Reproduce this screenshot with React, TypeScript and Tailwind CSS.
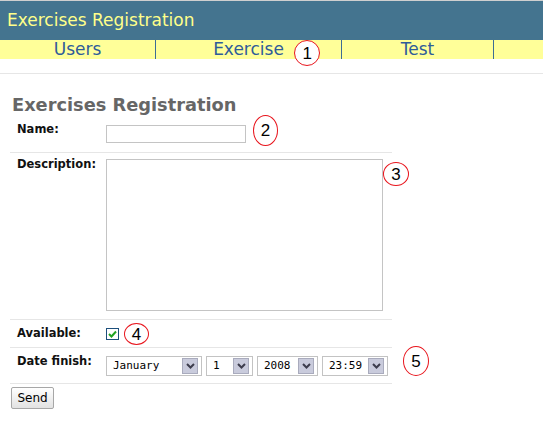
const Badge = ({ n, className }: { n: number; className: string }) => (
  <span
    className={`absolute flex items-center justify-center rounded-[50%] border border-[#e8141c] bg-white text-[17px] leading-none text-black font-['Liberation_Sans',sans-serif] ${className}`}
  >
    {n}
  </span>
);

const Select = ({ value, width }: { value: string; width: string }) => (
  <div
    className={`flex h-[20px] items-center justify-between border border-[#c3c3c3] bg-white pl-[6px] pr-[3px] ${width}`}
  >
    <span className="font-['DejaVu_Sans_Mono',monospace] text-[11px] text-black">
      {value}
    </span>
    <span className="flex h-[16px] w-[16px] items-center justify-center border border-[#a9abbd] bg-[#c9cbdc]">
      <svg width="9" height="6" viewBox="0 0 9 6">
        <path d="M1 1 L4.5 4.5 L8 1" fill="none" stroke="#3d3d4d" strokeWidth="2" />
      </svg>
    </span>
  </div>
);

const tabs = [
  { label: "Users", w: "w-[156px]" },
  { label: "Exercise", w: "w-[186px]", badge: true },
  { label: "Test", w: "w-[152px]" },
];

const App = () => {
  return (
    <div className="min-h-[433px] bg-white font-['DejaVu_Sans',Verdana,sans-serif] border-t border-[#cfcfcf]">
      <div className="h-[39px] bg-[#44748f] pl-[7px] text-[17px] leading-[39px] text-[#ffff8a]">
        Exercises Registration
      </div>
      <div className="flex h-[19px] bg-[#ffff99] text-[17px] leading-[19px] text-[#2f5c99]">
        {tabs.map((t) => (
          <div
            key={t.label}
            className={`relative flex justify-center border-r border-[#3d6c95] ${t.w}`}
          >
            <span className="relative">
              {t.label}
              {t.badge && <Badge n={1} className="left-[81px] top-0 h-[26px] w-[26px]" />}
            </span>
          </div>
        ))}
      </div>
      <div className="mt-[14px] border-t border-[#e6e6e6]" />

      <h1 className="mt-[20px] pl-[12px] text-[17.8px] font-bold leading-[22px] text-[#666666]">
        Exercises Registration
      </h1>

      <div className="ml-[10px] w-[382px] text-[11.5px] leading-[14px] text-[#111]">
        <div className="relative flex border-b border-[#e6e6e6] pt-[6px] pb-[9px]">
          <label className="w-[96px] pl-[7px] font-bold">Name:</label>
          <input className="mt-[3px] h-[18px] w-[140px] border border-[#c4c4c4] outline-none" />
          <Badge n={2} className="left-[243px] top-[-1px] h-[31px] w-[25px]" />
        </div>

        <div className="relative flex border-b border-[#e6e6e6] pt-[4px] pb-[8px]">
          <label className="w-[96px] pl-[7px] font-bold">Description:</label>
          <textarea className="mt-[2px] h-[152px] w-[277px] resize-none border border-[#c4c4c4] outline-none" />
          <Badge n={3} className="left-[373px] top-[9px] h-[24px] w-[26px]" />
        </div>

        <div className="relative flex border-b border-[#e6e6e6] pt-[6px] pb-[7px]">
          <label className="w-[96px] pl-[7px] font-bold">Available:</label>
          <span className="mt-[2px] flex h-[12px] w-[13px] items-center justify-center border border-[#1d4f7c] bg-white">
            <svg width="9" height="8" viewBox="0 0 9 8">
              <path d="M1 4 L3.5 6.5 L8 1.5" fill="none" stroke="#22a322" strokeWidth="2" />
            </svg>
          </span>
          <Badge n={4} className="left-[114px] top-[3px] h-[22px] w-[25px]" />
        </div>

        <div className="relative flex border-b border-[#e6e6e6] pt-[6px] pb-[7px]">
          <label className="w-[96px] pl-[7px] font-bold">Date finish:</label>
          <div className="mt-[2px] flex gap-[4px]">
            <Select value="January" width="w-[96px]" />
            <Select value="1" width="w-[47px]" />
            <Select value="2008" width="w-[61px]" />
            <Select value="23:59" width="w-[66px]" />
          </div>
          <Badge n={5} className="left-[393px] top-[-2px] h-[30px] w-[26px]" />
        </div>

        <button className="ml-[1px] mt-[3px] h-[22px] w-[43px] rounded-[2px] border border-[#a7a7a7] bg-gradient-to-b from-white to-[#e2e2e2] text-[12px] text-black">
          Send
        </button>
      </div>
    </div>
  );
};

export default App;
